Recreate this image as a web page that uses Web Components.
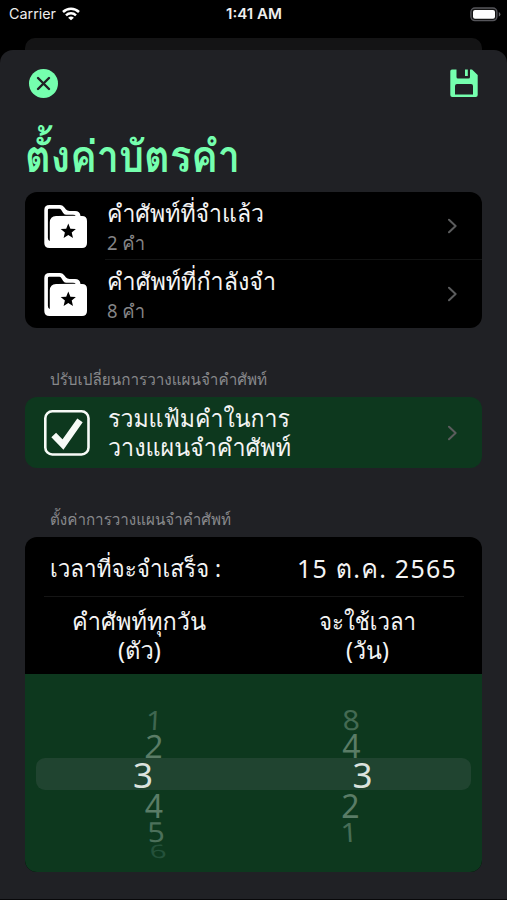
<!DOCTYPE html>
<html lang="th"><head><meta charset="utf-8"><title>ตั้งค่าบัตรคำ</title>
<style>body{margin:0;background:#000;font-family:"Noto Sans",Loma,"Noto Sans Thai Looped",sans-serif;color:#f4f4f4}</style></head>
<body><settings-screen></settings-screen>
<script>
const define=(name,css,html,after)=>customElements.define(name,class extends HTMLElement{
  connectedCallback(){if(this.shadowRoot)return;this.attachShadow({mode:'open'}).innerHTML=`<style>*{box-sizing:border-box}${css}</style>${html}`;if(after)after(this)}
});
// One line of text, scaled horizontally to the width in "w" and vertically by "v".
define('fit-text',`:host{display:block;white-space:nowrap;flex:none}span{display:inline-block;transform-origin:0 50%}`,`<span><slot></slot></span>`,el=>{
  const s=el.shadowRoot.querySelector('span'),w=+el.getAttribute('w'),h=el.getAttribute('h'),v=el.getAttribute('v')||1;
  el.style.fontSize=el.getAttribute('size')+'px';el.style.width=w+'px';el.style.height=el.style.lineHeight=h+'px';
  s.style.transform=`scale(${w/s.getBoundingClientRect().width},${v})`;
});
define('status-bar',`:host{display:grid;grid-template-columns:1fr auto 1fr;height:38px;padding:0 6px 10px 9px;align-items:center;font-family:Inter,sans-serif;color:#eee}
.l{display:flex;align-items:center;gap:6px}.r{justify-self:end;display:flex}svg{display:block}`,
`<div class="l"><fit-text size="14" w="47" h="20">Carrier</fit-text><svg width="18" height="14" viewBox="0 0 18 14" fill="none" stroke="#fff" stroke-width="2.5"><path d="M1 5a11.5 11.5 0 0 1 16 0M4 8.3a7.3 7.3 0 0 1 10 0"/><path d="M9 13.3 6.1 10.7a4.3 4.3 0 0 1 5.8 0z" fill="#fff" stroke="none"/></svg></div>
<fit-text size="14" w="56" h="20" style="font-weight:600;margin-right:2px">1:41 AM</fit-text>
<div class="r"><svg width="31" height="15" viewBox="0 0 31 15"><rect x=".9" y="1" width="26" height="12.6" rx="4" fill="#151515" stroke="#55555a" stroke-width="1.4"/><rect x="3" y="3" width="22" height="8.8" rx="2" fill="#fff"/><path d="M28.8 5q1.6.7 1.6 2.3t-1.6 2.3z" fill="#66666a"/></svg></div>`);
define('list-card',`:host{display:block;border-radius:12px;overflow:hidden;background:#000;width:457px}:host([green]){background:#0d381e}`,`<slot></slot>`);
define('chevron-icon',`:host{display:block;margin-left:auto}svg{display:block}`,`<svg width="10" height="16" viewBox="0 0 10 16" fill="none" stroke="#5b5c5d" stroke-width="2" stroke-linecap="round" stroke-linejoin="round"><path d="M2 1.7 8.6 8 2 14.3"/></svg>`);
define('folder-icon',`:host{display:block;width:43px;height:43px}svg{display:block}`,`<svg width="43" height="43" viewBox="0 0 43 43"><path d="M5.5 0H16Q18.5 0 20 2L22 4.6Q23.3 6 25.5 6H31Q36 6 36.5 11H38Q43 11 43 16V38Q43 43 38 43H5.5Q.3 43 .3 38V5Q.3 0 5.5 0Z" fill="#fff"/><path d="M5.2 3.8H15.3Q16.5 3.8 17.3 5L19 7.8Q20 9.6 22 9.8H29Q31.6 9.8 31.6 10.8L12 11Q6 11 5.8 17.5V36Q3.9 35.3 3.9 33V5.2Q3.9 3.8 5.2 3.8Z" fill="#000"/><path d="M24.3 18.6 26.4 23.7 31.9 24.1 27.7 27.6 29 33 24.3 30.1 19.6 33 20.9 27.6 16.7 24.1 22.2 23.7z" fill="#000"/></svg>`);
define('folder-row',`:host{display:flex;height:68px;padding:0 25px 0 19px;align-items:center;background:linear-gradient(#121313,#121313) 80px 100%/377px var(--line,0px) no-repeat}.t{margin-left:20px;height:64px}.s{color:#858587}`,
`<folder-icon></folder-icon><div class="t"><slot name="title"></slot><div class="s"><slot name="count"></slot></div></div><chevron-icon></chevron-icon>`);
define('check-row',`:host{display:flex;height:71px;padding:0 25px 0 19px;align-items:center}svg{display:block}.t{margin-left:18px;padding-bottom:2px}`,
`<svg width="46" height="46" viewBox="0 0 46 46" fill="none" stroke="#f7faf7"><rect x="1.3" y="1.3" width="43.2" height="43.2" rx="7" stroke-width="2.6"/><path d="M9.7 25 19 34.5 36 10.3" stroke-width="6.6"/></svg><div class="t"><slot></slot></div><chevron-icon></chevron-icon>`);
define('picker-wheel',`:host{display:grid;grid-template-columns:1fr 1fr;height:198px;background:#0d381e;padding:32px 11px 0}
.band{grid-area:1/1/2/3;height:32px;margin-top:52px;border-radius:9px;background:#204430}
.col{display:grid;grid-template-rows:26px 26px 32px 30px 22px 16px;z-index:1;padding-top:1px}.a{grid-area:1/1/2/2}.b{grid-area:1/2/2/3}
.col span{line-height:26px;height:26px;align-self:center;justify-self:start;color:#5a7c66;font-size:32px;display:block;width:20px;text-align:center;transform:scaleY(var(--s,1)) skewX(var(--k,0deg))}
.col .sel{color:#dce2dd;font-size:35px}`,
`<div class="band"></div><div class="col a"><span style="margin-left:108px;color:#3f6650;--s:.92;--k:-3deg;font-size:29px">1</span><span style="margin-left:108px;--k:-3deg">2</span><span class="sel" style="margin-left:97px">3</span><span style="margin-left:108px">4</span><span style="margin-left:110px;color:#4b705a;--s:.92;--k:3deg;font-size:30px">5</span><span style="margin-left:112px;color:#24513a;--s:.64;--k:6deg;font-size:29px">6</span></div>
<div class="col b"><span style="margin-left:87px;color:#446a53;--s:.92;--k:3deg;font-size:30px">8</span><span style="margin-left:88px">4</span><span class="sel" style="margin-left:99px">3</span><span style="margin-left:87px">2</span><span style="margin-left:85px;color:#476d56;--s:.92;--k:3deg;font-size:29px">1</span></div>`);
define('plan-panel',`:host{display:block}.d{display:flex;justify-content:space-between;height:60px;padding:1px 25px 0;align-items:center;background:linear-gradient(#151515,#151515) 19px 59px/420px 1px no-repeat}.h{display:grid;grid-template-columns:1fr 1fr;height:77px;padding-top:9px}.h>div{display:flex;flex-direction:column;align-items:center}`,
`<div class="d"><fit-text size="24" w="171" h="44">เวลาที่จะจำเสร็จ :</fit-text><fit-text size="26" w="160" h="44" style="letter-spacing:1.3px">15 ต.ค. 2565</fit-text></div><div class="h"><div><fit-text size="24" w="134" h="29">คำศัพท์ทุกวัน</fit-text><fit-text size="24" w="43" h="29">(ตัว)</fit-text></div><div><fit-text size="24" w="97" h="29">จะใช้เวลา</fit-text><fit-text size="24" w="43" h="29">(วัน)</fit-text></div></div><picker-wheel></picker-wheel>`);
define('modal-sheet',`:host{display:block;height:850px;background:#202125;border-radius:13px 13px 0 0;padding:0 25px;border-bottom:1px solid #08080a}
.bar{display:flex;justify-content:space-between;align-items:center;height:66px;padding:0 4px}svg{display:block}.title{height:76px;padding-top:9px;color:#75ffae;font-weight:600}`,
`<div class="bar"><svg width="29" height="29" viewBox="0 0 29 29"><circle cx="14.5" cy="14.5" r="14.5" fill="#75ffae"/><path d="m9 9 11 11M20 9 9 20" stroke="#202125" stroke-width="2.4" stroke-linecap="round"/></svg><svg width="28" height="28" viewBox="0 0 28 28"><path fill="#75ffae" fill-rule="evenodd" d="M2 .5H6.5V8Q6.5 9.5 8 9.5H18.5Q20 9.5 20 8V.5H22L27.7 6V26Q27.7 28 25.7 28H2.3Q.3 28 .3 26V2.2Q.3.5 2 .5ZM7 15Q5 15 5 17V25.5H23V17Q23 15 21 15ZM15 .5H17.8V7H15Z"/></svg></div><div class="title"><fit-text size="44" w="215" h="60">ตั้งค่าบัตรคำ</fit-text></div><slot></slot>`);
define('section-label',`:host{display:block;padding-left:25px;color:#88898c}`,`<slot></slot>`);
define('settings-screen',`:host{display:block;width:507px;height:900px;overflow:hidden;background:#000}.back{height:12px;margin:0 25px;background:#141415;border-radius:10px 10px 0 0}section-label{height:69px;padding-top:40px}`,
`<status-bar></status-bar><div class="back"></div><modal-sheet>
<list-card><folder-row style="--line:1px"><fit-text slot="title" size="24" w="157" h="38">คำศัพท์ที่จำแล้ว</fit-text><fit-text slot="count" size="19" w="38" h="22">2 คำ</fit-text></folder-row><folder-row><fit-text slot="title" size="24" w="169" h="38">คำศัพท์ที่กำลังจำ</fit-text><fit-text slot="count" size="19" w="38" h="22">8 คำ</fit-text></folder-row></list-card>
<section-label><fit-text size="16" w="217" h="22">ปรับเปลี่ยนการวางแผนจำคำศัพท์</fit-text></section-label>
<list-card green><check-row><fit-text size="24" w="182" h="29">รวมแฟ้มคำในการ</fit-text><fit-text size="24" w="183" h="29">วางแผนจำคำศัพท์</fit-text></check-row></list-card>
<section-label><fit-text size="16" w="181" h="22">ตั้งค่าการวางแผนจำคำศัพท์</fit-text></section-label>
<list-card><plan-panel></plan-panel></list-card></modal-sheet>`);
</script></body></html>
